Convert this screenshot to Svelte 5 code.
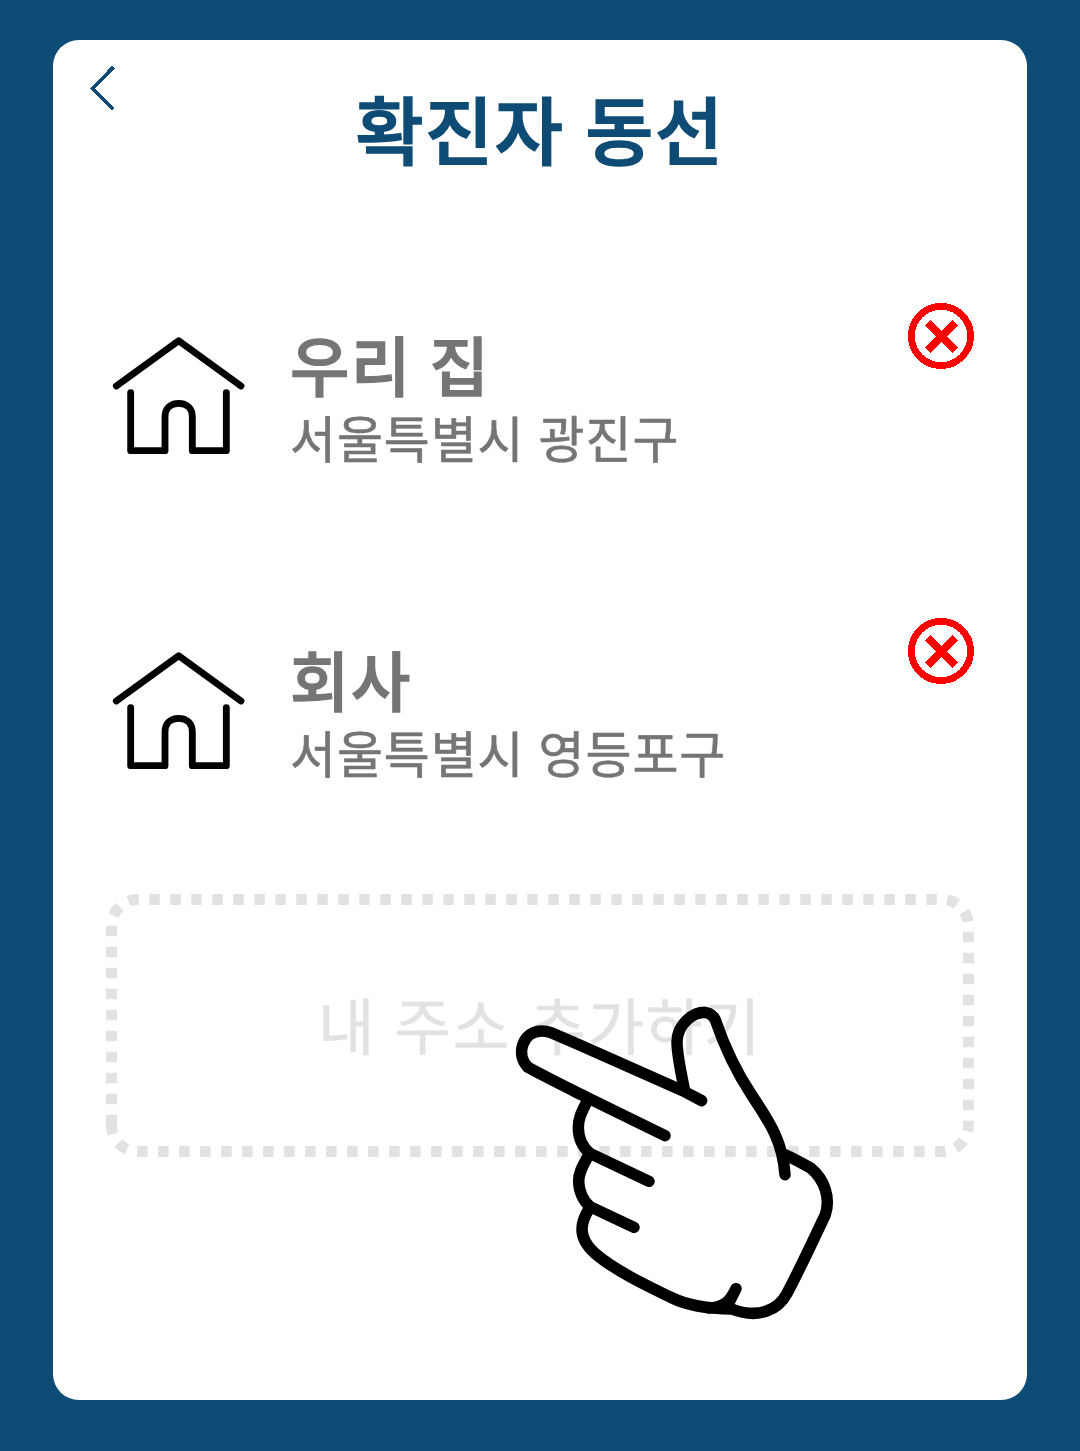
<script>
  const places = [
    { name: '우리 집', address: '서울특별시 광진구' },
    { name: '회사', address: '서울특별시 영등포구' },
  ];
</script>

<main class="screen">
  <section class="card">
    <header>
      <button class="back" aria-label="뒤로">
        <svg viewBox="0 0 30 50" width="30" height="50" shape-rendering="crispEdges">
          <path d="M28.3 4.2 7.3 25.5 28.3 46.6" fill="none" stroke="#0f4c75" stroke-width="3.6" />
        </svg>
      </button>
      <h1>확진자 동선</h1>
    </header>

    <ul>
      {#each places as place}
        <li>
          <svg class="home" viewBox="0 0 405 360" width="135" height="120">
            <g fill="none" stroke="#000" stroke-width="20.5" stroke-linecap="round" stroke-linejoin="round">
              <path d="M19 150 206 14 393 150" />
              <path d="M62 170V344H165V243C165 216 183 202 206 202S247 216 247 243V344H349V170" />
            </g>
          </svg>
          <div class="info">
            <strong>{place.name}</strong>
            <span>{place.address}</span>
          </div>
          <button class="remove" aria-label="삭제">
            <svg viewBox="0 0 66 66" width="66" height="66" shape-rendering="crispEdges">
              <circle cx="33" cy="33" r="29.6" fill="none" stroke="#f00" stroke-width="6.8" />
              <path d="M19.6 19.6 47.2 47.2M47.2 19.6 19.6 47.2" stroke="#f00" stroke-width="7.8" />
            </svg>
          </button>
        </li>
      {/each}
    </ul>

    <button class="add">
      <svg class="outline" viewBox="0 0 868 263" width="868" height="263">
        <path
          d="M5.5 231.25V31.75A26.25 26.25 0 0 1 31.75 5.5H836.25A26.25 26.25 0 0 1 862.5 31.75V231.25A26.25 26.25 0 0 1 836.25 257.5H31.75A26.25 26.25 0 0 1 5.5 231.25Z"
          fill="none" stroke="#e2e2e2" stroke-width="11" stroke-dasharray="10.5 10.5"
        />
      </svg>
      <span>내 주소 추가하기</span>
      <svg class="hand" viewBox="0 0 1050 1050" width="350" height="350">
        <g fill="none" stroke="#000" stroke-width="34.5" stroke-linecap="round" stroke-linejoin="round">
          <path d="M605 362 550 333C430 280 290 217 154 158C112 145 80 160 68 195C60 220 67 245 84 262C140 293 200 322 262 353L495 467" />
          <path d="M262 362C248 392 235 410 235 443C235 477 249 502 270 520L447 604" />
          <path d="M266 525C252 552 236 575 236 603C236 635 251 664 270 680L402 742" />
          <path d="M268 685C252 710 246 728 246 748C246 776 262 800 285 820C340 868 430 912 517 954C570 980 630 986 695 987C775 1018 835 990 861 940C900 867 940 780 976 704C992 655 975 600 932 564Q890 540 855 524" />
          <path d="M552 322C540 265 531 215 531 185C533 130 580 97 615 97C633 100 641 108 646 120C664 173 695 255 755 345C805 422 848 480 855 584" />
          <path d="M708 926C690 965 670 984 625 984M708 926 688 966 680 985" />
        </g>
      </svg>
    </button>
  </section>
</main>

<style>
  :global(body) { background: #0f4c75; }
  .screen {
    box-sizing: border-box;
    height: 1451px;
    padding: 40px 53px 51px;
    background: #0f4c75;
    font-family: 'Noto Sans CJK KR', sans-serif;
  }
  .card {
    box-sizing: border-box;
    height: 1360px;
    padding: 0 53px;
    border-radius: 26px;
    background: #fff;
  }
  button {
    padding: 0;
    border: 0;
    background: none;
    font: inherit;
    color: inherit;
  }
  svg { display: block; }
  header {
    display: grid;
    grid-template-columns: 30px 1fr 30px;
    height: 223px;
    margin: 0 -21px;
  }
  .back { align-self: start; margin-top: 23px; }
  h1 {
    margin: 33px 0 0;
    font-size: 74px;
    line-height: 108px;
    font-weight: 500;
    letter-spacing: 1.5px;
    word-spacing: 3px;
    -webkit-text-stroke: 1.6px;
    text-align: center;
    white-space: nowrap;
    color: #0f4c75;
  }
  ul { margin: 0; padding: 0; list-style: none; }
  li {
    display: flex;
    align-items: flex-start;
    height: 315px;
    color: #757575;
  }
  .home { flex: none; margin: 73px 0 0 4px; }
  .info {
    display: flex;
    flex: 1;
    flex-direction: column;
    margin: 60px 0 0 45px;
    white-space: nowrap;
  }
  strong {
    font-size: 64.5px;
    line-height: 80px;
    font-weight: 500;
    letter-spacing: 1.6px;
    word-spacing: 1.5px;
    -webkit-text-stroke: 1.3px;
  }
  .info span {
    font-size: 50px;
    line-height: 66px;
    letter-spacing: 0.9px;
    word-spacing: 2px;
    -webkit-text-stroke: 0.6px;
  }
  .remove { margin-top: 40px; }
  .add {
    position: relative;
    display: grid;
    place-items: center;
    width: 868px;
    height: 263px;
    margin-top: 1px;
    font-size: 61.5px;
    line-height: 92px;
    letter-spacing: 1.6px;
    word-spacing: 3px;
    color: #e2e2e2;
  }
  .add span { margin-top: -4px; -webkit-text-stroke: 0.5px; }
  .outline { position: absolute; inset: 0; }
  .hand { position: absolute; left: 394px; top: 86px; }
</style>
